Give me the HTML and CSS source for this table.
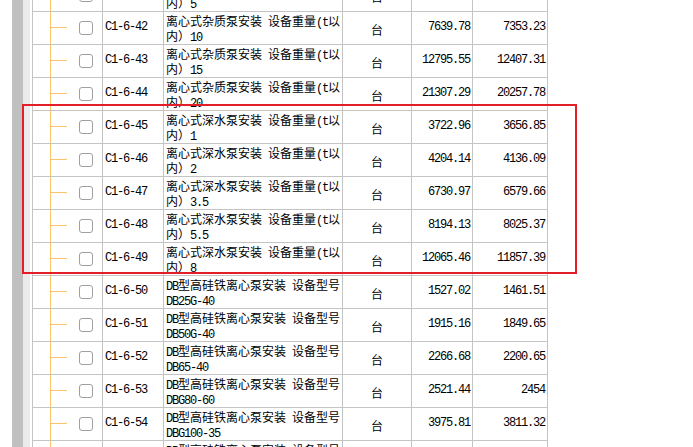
FILE: index.html
```html
<!DOCTYPE html>
<html lang="zh-CN">
<head>
<meta charset="utf-8">
<title>定额列表</title>
<link rel="stylesheet" href="styles.css">
</head>
<body>
<div class="page">
  <div class="gutter"><div class="g-white"></div><div class="g-dark"></div><div class="g-light"></div></div>
  <div class="grid">
    <div class="row">
      <div class="tree"><span class="cb"></span></div>
      <div class="code"><span class="m">C1-6-41</span></div>
      <div class="desc">离心式杂质泵安装<span class="m"> </span>设备重量<span class="m">(t</span>以<br>内）<span class="m">5</span></div>
      <div class="unit">台</div>
      <div class="num"><span class="m">4987.21</span></div>
      <div class="num"><span class="m">4812.06</span></div>
    </div>
    <div class="row">
      <div class="tree"><span class="cb"></span></div>
      <div class="code"><span class="m">C1-6-42</span></div>
      <div class="desc">离心式杂质泵安装<span class="m"> </span>设备重量<span class="m">(t</span>以<br>内）<span class="m">10</span></div>
      <div class="unit">台</div>
      <div class="num"><span class="m">7639.78</span></div>
      <div class="num"><span class="m">7353.23</span></div>
    </div>
    <div class="row">
      <div class="tree"><span class="cb"></span></div>
      <div class="code"><span class="m">C1-6-43</span></div>
      <div class="desc">离心式杂质泵安装<span class="m"> </span>设备重量<span class="m">(t</span>以<br>内）<span class="m">15</span></div>
      <div class="unit">台</div>
      <div class="num"><span class="m">12795.55</span></div>
      <div class="num"><span class="m">12407.31</span></div>
    </div>
    <div class="row">
      <div class="tree"><span class="cb"></span></div>
      <div class="code"><span class="m">C1-6-44</span></div>
      <div class="desc">离心式杂质泵安装<span class="m"> </span>设备重量<span class="m">(t</span>以<br>内）<span class="m">20</span></div>
      <div class="unit">台</div>
      <div class="num"><span class="m">21307.29</span></div>
      <div class="num"><span class="m">20257.78</span></div>
    </div>
    <div class="row">
      <div class="tree"><span class="cb"></span></div>
      <div class="code"><span class="m">C1-6-45</span></div>
      <div class="desc">离心式深水泵安装<span class="m"> </span>设备重量<span class="m">(t</span>以<br>内）<span class="m">1</span></div>
      <div class="unit">台</div>
      <div class="num"><span class="m">3722.96</span></div>
      <div class="num"><span class="m">3656.85</span></div>
    </div>
    <div class="row">
      <div class="tree"><span class="cb"></span></div>
      <div class="code"><span class="m">C1-6-46</span></div>
      <div class="desc">离心式深水泵安装<span class="m"> </span>设备重量<span class="m">(t</span>以<br>内）<span class="m">2</span></div>
      <div class="unit">台</div>
      <div class="num"><span class="m">4204.14</span></div>
      <div class="num"><span class="m">4136.09</span></div>
    </div>
    <div class="row">
      <div class="tree"><span class="cb"></span></div>
      <div class="code"><span class="m">C1-6-47</span></div>
      <div class="desc">离心式深水泵安装<span class="m"> </span>设备重量<span class="m">(t</span>以<br>内）<span class="m">3.5</span></div>
      <div class="unit">台</div>
      <div class="num"><span class="m">6730.97</span></div>
      <div class="num"><span class="m">6579.66</span></div>
    </div>
    <div class="row">
      <div class="tree"><span class="cb"></span></div>
      <div class="code"><span class="m">C1-6-48</span></div>
      <div class="desc">离心式深水泵安装<span class="m"> </span>设备重量<span class="m">(t</span>以<br>内）<span class="m">5.5</span></div>
      <div class="unit">台</div>
      <div class="num"><span class="m">8194.13</span></div>
      <div class="num"><span class="m">8025.37</span></div>
    </div>
    <div class="row">
      <div class="tree"><span class="cb"></span></div>
      <div class="code"><span class="m">C1-6-49</span></div>
      <div class="desc">离心式深水泵安装<span class="m"> </span>设备重量<span class="m">(t</span>以<br>内）<span class="m">8</span></div>
      <div class="unit">台</div>
      <div class="num"><span class="m">12065.46</span></div>
      <div class="num"><span class="m">11857.39</span></div>
    </div>
    <div class="row">
      <div class="tree"><span class="cb"></span></div>
      <div class="code"><span class="m">C1-6-50</span></div>
      <div class="desc"><span class="m">DB</span>型高硅铁离心泵安装<span class="m"> </span>设备型号<br><span class="m">DB25G-40</span></div>
      <div class="unit">台</div>
      <div class="num"><span class="m">1527.02</span></div>
      <div class="num"><span class="m">1461.51</span></div>
    </div>
    <div class="row">
      <div class="tree"><span class="cb"></span></div>
      <div class="code"><span class="m">C1-6-51</span></div>
      <div class="desc"><span class="m">DB</span>型高硅铁离心泵安装<span class="m"> </span>设备型号<br><span class="m">DB50G-40</span></div>
      <div class="unit">台</div>
      <div class="num"><span class="m">1915.16</span></div>
      <div class="num"><span class="m">1849.65</span></div>
    </div>
    <div class="row">
      <div class="tree"><span class="cb"></span></div>
      <div class="code"><span class="m">C1-6-52</span></div>
      <div class="desc"><span class="m">DB</span>型高硅铁离心泵安装<span class="m"> </span>设备型号<br><span class="m">DB65-40</span></div>
      <div class="unit">台</div>
      <div class="num"><span class="m">2266.68</span></div>
      <div class="num"><span class="m">2200.65</span></div>
    </div>
    <div class="row">
      <div class="tree"><span class="cb"></span></div>
      <div class="code"><span class="m">C1-6-53</span></div>
      <div class="desc"><span class="m">DB</span>型高硅铁离心泵安装<span class="m"> </span>设备型号<br><span class="m">DBG80-60</span></div>
      <div class="unit">台</div>
      <div class="num"><span class="m">2521.44</span></div>
      <div class="num"><span class="m">2454</span></div>
    </div>
    <div class="row">
      <div class="tree"><span class="cb"></span></div>
      <div class="code"><span class="m">C1-6-54</span></div>
      <div class="desc"><span class="m">DB</span>型高硅铁离心泵安装<span class="m"> </span>设备型号<br><span class="m">DBG100-35</span></div>
      <div class="unit">台</div>
      <div class="num"><span class="m">3975.81</span></div>
      <div class="num"><span class="m">3811.32</span></div>
    </div>
    <div class="row">
      <div class="tree"><span class="cb"></span></div>
      <div class="code"><span class="m">C1-6-55</span></div>
      <div class="desc"><span class="m">DB</span>型高硅铁离心泵安装<span class="m"> </span>设备型号<br><span class="m">DBG150-35</span></div>
      <div class="unit">台</div>
      <div class="num"><span class="m">5120.37</span></div>
      <div class="num"><span class="m">4906.12</span></div>
    </div>
  </div>
  <div class="highlight"></div>
</div>
</body>
</html>
```
FILE: styles.css
```css
html, body {
  margin: 0;
  padding: 0;
  background: #ffffff;
  overflow: hidden;
}
body {
  font-family: "Noto Sans CJK SC", "Liberation Sans", sans-serif;
  font-size: 12px;
  color: #000000;
}
.page {
  position: relative;
  display: flex;
  align-items: flex-start;
  width: 693px;
  height: 447px;
  overflow: hidden;
}
.gutter {
  display: flex;
  flex-shrink: 0;
  width: 32px;
  height: 447px;
}
.g-white { width: 12px; }
.g-dark { width: 11px; background: #c0c0c0; }
.g-light { width: 7px; background: #ebebeb; }

.grid {
  flex-shrink: 0;
  margin-top: -21px;
  border-left: 1px solid #c4c4c4;
}
.row {
  display: grid;
  grid-template-columns: 70px 61px 179px 69px 61px 75px;
  height: 33px;
}
.row > div {
  box-sizing: border-box;
  border-right: 1px solid #c4c4c4;
  border-bottom: 1px solid #c4c4c4;
  overflow: hidden;
  white-space: nowrap;
}
.m {
  font-family: "Liberation Mono", "DejaVu Sans Mono", monospace;
  font-size: 12px;
  letter-spacing: -1.2px;
}
.tree {
  display: flex;
  align-items: flex-start;
  padding: 9px 0 0 46px;
  background:
    linear-gradient(#fbc46c, #fbc46c) 17px 0 / 1px 100% no-repeat,
    linear-gradient(#fbc46c, #fbc46c) 17px 15px / 17px 1px no-repeat;
}
.cb {
  display: block;
  width: 14px;
  height: 14px;
  box-sizing: border-box;
  border: 1px solid #a0a0a0;
  border-radius: 3px;
  background: #ffffff;
}
.code {
  display: flex;
  align-items: center;
  padding: 0 0 2px 2px;
  line-height: 13px;
}
.desc {
  padding: 3px 0 0 2px;
  line-height: 12.5px;
}
.unit {
  display: flex;
  align-items: center;
  justify-content: center;
  padding: 3px 0 0 0;
  line-height: 13px;
}
.num {
  display: flex;
  align-items: center;
  justify-content: flex-end;
  padding: 0 2px 2px 0;
  line-height: 13px;
}
.highlight {
  position: absolute;
  left: 22px;
  top: 104px;
  width: 555px;
  height: 170px;
  box-sizing: border-box;
  border: 2px solid #e41e26;
  pointer-events: none;
}
```
